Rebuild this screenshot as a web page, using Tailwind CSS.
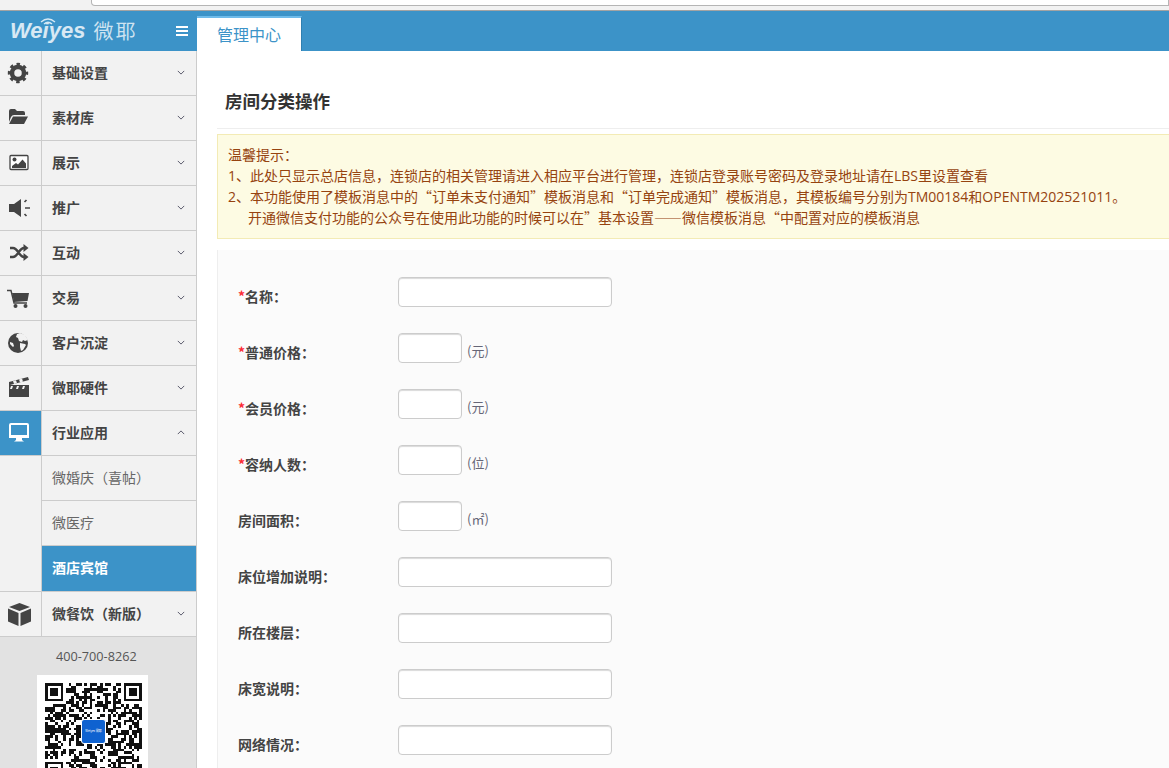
<!DOCTYPE html>
<html lang="zh-CN">
<head>
    <meta charset="utf-8">
    <title>房间分类操作</title>
    <script src="https://cdn.jsdelivr.net/npm/@tailwindcss/browser@4"></script>
</head>
<body class="h-screen overflow-hidden flex flex-col bg-white text-sm font-['Noto_Sans_CJK_SC','Liberation_Sans',sans-serif]">
    <!-- browser address bar leftover -->
    <div class="h-[11px] shrink-0 bg-[#f2f2f2] border-b border-[#a3a3a3] pl-[91px]">
        <div class="h-[6px] bg-white border border-t-0 border-[#b5b5b5] rounded-bl-sm"></div>
    </div>

    <div class="flex flex-1 min-h-0">
        <!-- sidebar -->
        <aside class="w-[197px] shrink-0 flex flex-col bg-[#e2e2e2] border-r border-[#ccc]">
            <div class="h-10 shrink-0 -mr-px bg-[#3c93c8] flex items-center pl-[10px] relative">
                <span class="relative text-white/80 italic font-bold text-[22px] leading-none font-['Liberation_Sans',sans-serif]">Weiyes
                    <svg class="absolute left-[29px] -top-[4px]" width="18" height="10" viewBox="0 0 18 10" fill="none" stroke="#d6e9f5" stroke-width="1.3"><path d="M2 6q7-6 14 0M5 8q4-3.500 8 0"/></svg>
                </span>
                <span class="ml-[8px] text-white/75 text-[20px] leading-none tracking-[2px]">微耶</span>
                <div class="absolute left-[176px] top-[15px] w-3 flex flex-col gap-[2px]">
                    <i class="block h-[2px] bg-white"></i>
                    <i class="block h-[2px] bg-white"></i>
                    <i class="block h-[2px] bg-white"></i>
                </div>
            </div>

            <nav class="bg-[#f2f2f2] shrink-0">
                <a class="flex h-[45px] border-b border-[#ccc]">
                    <svg class="w-[41px] h-[44px] shrink-0" viewBox="0 0 41 44" fill="#444"><circle cx="18" cy="22" r="6" fill="none" stroke="#444" stroke-width="4.500"/><circle cx="18" cy="22" r="8.700" fill="none" stroke="#444" stroke-width="3" stroke-dasharray="3.400 3.430" stroke-dashoffset="1.700"/></svg>
                    <div class="flex-1 flex items-center justify-between border-l border-[#ccc] pl-[10px] pr-[11px] pb-[2px] font-semibold text-[#444]"><span>基础设置</span><svg width="8" height="5" viewBox="0 0 10 6" fill="none" stroke="#556" stroke-width="1.200"><path d="M1 1l4 4 4-4"/></svg></div>
                </a>
                <a class="flex h-[45px] border-b border-[#ccc]">
                    <svg class="w-[41px] h-[44px] shrink-0" viewBox="0 0 41 44" fill="#444"><path d="M9 26V15q0-2 2-2h4l2 2h6q2 0 2 2v2H14q-2 0-3 2z"/><path d="M13 20.500h15l-4 7.500H9z"/></svg>
                    <div class="flex-1 flex items-center justify-between border-l border-[#ccc] pl-[10px] pr-[11px] pb-[2px] font-semibold text-[#444]"><span>素材库</span><svg width="8" height="5" viewBox="0 0 10 6" fill="none" stroke="#556" stroke-width="1.200"><path d="M1 1l4 4 4-4"/></svg></div>
                </a>
                <a class="flex h-[45px] border-b border-[#ccc]">
                    <svg class="w-[41px] h-[44px] shrink-0" viewBox="0 0 41 44" fill="#444"><rect x="10" y="14.500" width="18" height="14" rx="1" fill="#fff" stroke="#444" stroke-width="1.300"/><circle cx="14.500" cy="18.500" r="2"/><path d="M12 27v-2l4-3 2 1.500 4.500-5 3.500 4v4.500z"/></svg>
                    <div class="flex-1 flex items-center justify-between border-l border-[#ccc] pl-[10px] pr-[11px] pb-[2px] font-semibold text-[#444]"><span>展示</span><svg width="8" height="5" viewBox="0 0 10 6" fill="none" stroke="#556" stroke-width="1.200"><path d="M1 1l4 4 4-4"/></svg></div>
                </a>
                <a class="flex h-[45px] border-b border-[#ccc]">
                    <svg class="w-[41px] h-[44px] shrink-0" viewBox="0 0 41 44" fill="#444"><path d="M9 18h5l7-5v18l-7-5H9z"/><path d="M24.500 16l2-2M25 22h5M24.500 28l2 2" stroke="#444" stroke-width="1.700" fill="none"/></svg>
                    <div class="flex-1 flex items-center justify-between border-l border-[#ccc] pl-[10px] pr-[11px] pb-[2px] font-semibold text-[#444]"><span>推广</span><svg width="8" height="5" viewBox="0 0 10 6" fill="none" stroke="#556" stroke-width="1.200"><path d="M1 1l4 4 4-4"/></svg></div>
                </a>
                <a class="flex h-[45px] border-b border-[#ccc]">
                    <svg class="w-[41px] h-[44px] shrink-0" viewBox="0 0 41 44" fill="#444"><path d="M10 17h3c5 0 6 9 11 9M10 26h3c5 0 6-9 11-9" fill="none" stroke="#444" stroke-width="2.400"/><path d="M23.500 13l5 4-5 4zM23.500 22l5 4-5 4z"/></svg>
                    <div class="flex-1 flex items-center justify-between border-l border-[#ccc] pl-[10px] pr-[11px] pb-[2px] font-semibold text-[#444]"><span>互动</span><svg width="8" height="5" viewBox="0 0 10 6" fill="none" stroke="#556" stroke-width="1.200"><path d="M1 1l4 4 4-4"/></svg></div>
                </a>
                <a class="flex h-[45px] border-b border-[#ccc]">
                    <svg class="w-[41px] h-[44px] shrink-0" viewBox="0 0 41 44" fill="#444"><path d="M7 14.500h4l3 12.500h13" fill="none" stroke="#444" stroke-width="1.400"/><path d="M12 17h17l-1.500 8L14 26z"/><circle cx="15.500" cy="30" r="2"/><circle cx="25.500" cy="30" r="2"/></svg>
                    <div class="flex-1 flex items-center justify-between border-l border-[#ccc] pl-[10px] pr-[11px] pb-[2px] font-semibold text-[#444]"><span>交易</span><svg width="8" height="5" viewBox="0 0 10 6" fill="none" stroke="#556" stroke-width="1.200"><path d="M1 1l4 4 4-4"/></svg></div>
                </a>
                <a class="flex h-[45px] border-b border-[#ccc]">
                    <svg class="w-[41px] h-[44px] shrink-0" viewBox="0 0 41 44" fill="#444"><circle cx="18" cy="22" r="10"/><path d="M17 13l3-1 5 2 3 5-3 1-2-1-1 2-3-1-1-3-2-1zM20 22l5 1 1 1-3 5-2 1-1-4zM10 21l3 1 1 3-1 1-3-3z" fill="#f2f2f2"/></svg>
                    <div class="flex-1 flex items-center justify-between border-l border-[#ccc] pl-[10px] pr-[11px] pb-[2px] font-semibold text-[#444]"><span>客户沉淀</span><svg width="8" height="5" viewBox="0 0 10 6" fill="none" stroke="#556" stroke-width="1.200"><path d="M1 1l4 4 4-4"/></svg></div>
                </a>
                <a class="flex h-[45px] border-b border-[#ccc]">
                    <svg class="w-[41px] h-[44px] shrink-0" viewBox="0 0 41 44" fill="#444"><rect x="9" y="19" width="20" height="12"/><path d="M9 16l19-5 1 3-20 5.300z"/><path d="M13 15l3-.800 1 3-3 .800zM19 13.400l3-.800 1 3-3 .800zM11 20h2l-1 3h-2zM17 20h2l-1 3h-2zM23 20h2l-1 3h-2z" fill="#f2f2f2"/></svg>
                    <div class="flex-1 flex items-center justify-between border-l border-[#ccc] pl-[10px] pr-[11px] pb-[2px] font-semibold text-[#444]"><span>微耶硬件</span><svg width="8" height="5" viewBox="0 0 10 6" fill="none" stroke="#556" stroke-width="1.200"><path d="M1 1l4 4 4-4"/></svg></div>
                </a>
                <a class="flex h-[45px] border-b border-[#ccc]">
                    <div class="w-[41px] shrink-0 h-[44px] bg-[#3c93c8]">
                        <svg class="w-[41px] h-[44px]" viewBox="0 0 41 44" fill="#fff"><rect x="10" y="13" width="18" height="13" rx="1" fill="#3c93c8" stroke="#fff" stroke-width="2"/><path d="M9 24h20v3H9zM16 27h6v2l2 1.500H14l2-1.500z"/></svg>
                    </div>
                    <div class="flex-1 flex items-center justify-between border-l border-[#ccc] pl-[10px] pr-[11px] pb-[2px] font-semibold text-[#444]"><span>行业应用</span><svg width="8" height="5" viewBox="0 0 10 6" fill="none" stroke="#556" stroke-width="1.200"><path d="M1 5l4-4 4 4"/></svg></div>
                </a>
                <div class="ml-[41px] border-l border-[#ccc]">
                    <a class="flex items-center h-[45px] pl-[10px] pb-[2px] border-b border-[#ccc] text-[#666]">微婚庆<span class="font-['Noto_Sans_CJK_TC',sans-serif]">（</span>喜帖<span class="font-['Noto_Sans_CJK_TC',sans-serif]">）</span></a>
                    <a class="flex items-center h-[45px] pl-[10px] pb-[2px] border-b border-[#ccc] text-[#666]">微医疗</a>
                    <a class="flex items-center h-[45px] pl-[10px] pb-[3px] bg-[#3c93c8] text-white font-semibold">酒店宾馆</a>
                </div>
                <a class="flex h-[46px] border-y border-[#ccc]">
                    <svg class="w-[41px] h-[44px] shrink-0" viewBox="0 0 41 44" fill="#444"><path d="M19.500 11l10.500 4-10.500 4L9 15z"/><path d="M8 16.500l10.500 4.500v13L8 29.500zM20.500 21L31 16.500v13L20.500 34z"/></svg>
                    <div class="flex-1 flex items-center justify-between border-l border-[#ccc] pl-[10px] pr-[11px] pb-[2px] font-semibold text-[#444]"><span>微餐饮<span class="font-['Noto_Sans_CJK_TC',sans-serif]">（</span>新版<span class="font-['Noto_Sans_CJK_TC',sans-serif]">）</span></span><svg width="8" height="5" viewBox="0 0 10 6" fill="none" stroke="#556" stroke-width="1.200"><path d="M1 1l4 4 4-4"/></svg></div>
                </a>
            </nav>

            <div class="flex flex-col items-start pt-[10px]">
                <p class="ml-[56px] text-[12.700px] leading-[18px] text-[#555] font-['Open_Sans',sans-serif]">400-700-8262</p>
                <div class="ml-[37px] mt-[10px] w-[111px] h-[111px] shrink-0 bg-white relative">
                    <svg id="qr" class="absolute left-[8px] top-[8px]" width="97" height="97" viewBox="0 0 37 37" shape-rendering="crispEdges"></svg>
                    <div class="absolute left-[44px] top-[44px] w-[25px] h-[25px] rounded-[3px] bg-[#0f62d0] border border-white flex items-center justify-center text-[3px] text-white">Weiyes 微耶</div>
                </div>
            </div>
        </aside>

        <!-- main -->
        <main class="flex-1 min-w-0 flex flex-col">
            <div class="h-10 shrink-0 bg-[#3c93c8] pt-[5px]">
                <div class="w-[105px] h-[35px] bg-white border-t-2 border-[#6fbbea] border-r border-r-[#2f7fb0] text-[#3c93c8] text-base pb-[2px] flex items-center justify-center">管理中心</div>
            </div>

            <div class="pl-5 flex-1 min-h-0 overflow-hidden">
                <div class="h-[78px] border-b border-[#eee] pl-2 flex items-center pt-[22px]">
                    <h2 class="text-[17.500px] font-bold text-[#333]">房间分类操作</h2>
                </div>

                <div class="mt-[5px] h-[105px] bg-[#fdfbe3] border-y border-l border-[#f3ebb5] pl-[10px] pt-[9px] text-sm leading-[21px] text-[#96430f] whitespace-nowrap overflow-hidden">
                    <p>温馨提示<span class="font-['Noto_Sans_CJK_TC',sans-serif]">：</span></p>
                    <p><span class="font-['Open_Sans',sans-serif]">1</span>、此处只显示总店信息<span class="font-['Noto_Sans_CJK_TC',sans-serif]">，</span>连锁店的相关管理请进入相应平台进行管理<span class="font-['Noto_Sans_CJK_TC',sans-serif]">，</span>连锁店登录账号密码及登录地址请在<span class="font-['Open_Sans',sans-serif]">LBS</span>里设置查看</p>
                    <p><span class="font-['Open_Sans',sans-serif]">2</span>、本功能使用了模板消息中的“订单未支付通知”模板消息和“订单完成通知”模板消息<span class="font-['Noto_Sans_CJK_TC',sans-serif]">，</span>其模板编号分别为<span class="font-['Open_Sans',sans-serif]">TM00184</span>和<span class="font-['Open_Sans',sans-serif]">OPENTM202521011</span>。</p>
                    <p class="pl-[20px]">开通微信支付功能的公众号在使用此功能的时候可以在”基本设置——微信模板消息“中配置对应的模板消息</p>
                </div>

                <form class="mt-[11px] h-full bg-[#fbfbfb] border-l border-[#eee] pl-5 pt-[27px]">
                    <div class="flex h-[56px]">
                        <label class="w-40 pt-[9px] font-semibold text-[#444] leading-5"><span class="text-red-500">*</span>名称<span class="font-['Noto_Sans_CJK_TC',sans-serif]">：</span></label>
                        <input class="w-[214px] h-[30px] bg-white border border-[#ccc] rounded shadow-[inset_0_1px_1px_rgba(0,0,0,0.15)]">
                    </div>
                    <div class="flex h-[56px]">
                        <label class="w-40 pt-[9px] font-semibold text-[#444] leading-5"><span class="text-red-500">*</span>普通价格<span class="font-['Noto_Sans_CJK_TC',sans-serif]">：</span></label>
                        <input class="w-16 h-[30px] bg-white border border-[#ccc] rounded shadow-[inset_0_1px_1px_rgba(0,0,0,0.15)]">
                        <span class="ml-[5px] pt-[8px] text-[13px] leading-5 text-[#667]">(元)</span>
                    </div>
                    <div class="flex h-[56px]">
                        <label class="w-40 pt-[9px] font-semibold text-[#444] leading-5"><span class="text-red-500">*</span>会员价格<span class="font-['Noto_Sans_CJK_TC',sans-serif]">：</span></label>
                        <input class="w-16 h-[30px] bg-white border border-[#ccc] rounded shadow-[inset_0_1px_1px_rgba(0,0,0,0.15)]">
                        <span class="ml-[5px] pt-[8px] text-[13px] leading-5 text-[#667]">(元)</span>
                    </div>
                    <div class="flex h-[56px]">
                        <label class="w-40 pt-[9px] font-semibold text-[#444] leading-5"><span class="text-red-500">*</span>容纳人数<span class="font-['Noto_Sans_CJK_TC',sans-serif]">：</span></label>
                        <input class="w-16 h-[30px] bg-white border border-[#ccc] rounded shadow-[inset_0_1px_1px_rgba(0,0,0,0.15)]">
                        <span class="ml-[5px] pt-[8px] text-[13px] leading-5 text-[#667]">(位)</span>
                    </div>
                    <div class="flex h-[56px]">
                        <label class="w-40 pt-[9px] font-semibold text-[#444] leading-5">房间面积<span class="font-['Noto_Sans_CJK_TC',sans-serif]">：</span></label>
                        <input class="w-16 h-[30px] bg-white border border-[#ccc] rounded shadow-[inset_0_1px_1px_rgba(0,0,0,0.15)]">
                        <span class="ml-[5px] pt-[8px] text-[13px] leading-5 text-[#667]">(㎡)</span>
                    </div>
                    <div class="flex h-[56px]">
                        <label class="w-40 pt-[9px] font-semibold text-[#444] leading-5">床位增加说明<span class="font-['Noto_Sans_CJK_TC',sans-serif]">：</span></label>
                        <input class="w-[214px] h-[30px] bg-white border border-[#ccc] rounded shadow-[inset_0_1px_1px_rgba(0,0,0,0.15)]">
                    </div>
                    <div class="flex h-[56px]">
                        <label class="w-40 pt-[9px] font-semibold text-[#444] leading-5">所在楼层<span class="font-['Noto_Sans_CJK_TC',sans-serif]">：</span></label>
                        <input class="w-[214px] h-[30px] bg-white border border-[#ccc] rounded shadow-[inset_0_1px_1px_rgba(0,0,0,0.15)]">
                    </div>
                    <div class="flex h-[56px]">
                        <label class="w-40 pt-[9px] font-semibold text-[#444] leading-5">床宽说明<span class="font-['Noto_Sans_CJK_TC',sans-serif]">：</span></label>
                        <input class="w-[214px] h-[30px] bg-white border border-[#ccc] rounded shadow-[inset_0_1px_1px_rgba(0,0,0,0.15)]">
                    </div>
                    <div class="flex h-[56px]">
                        <label class="w-40 pt-[9px] font-semibold text-[#444] leading-5">网络情况<span class="font-['Noto_Sans_CJK_TC',sans-serif]">：</span></label>
                        <input class="w-[214px] h-[30px] bg-white border border-[#ccc] rounded shadow-[inset_0_1px_1px_rgba(0,0,0,0.15)]">
                    </div>
                </form>
            </div>
        </main>
    </div>

    <script>
        // qr code: finder squares plus a fixed pseudo random fill
        const size = 37;
        let seed = 8262;
        let d = '';
        const inFinder = (x, y) => (x < 8 && y < 8) || (x > 28 && y < 8) || (x < 8 && y > 28);
        for (let y = 0; y < size; y++) {
            for (let x = 0; x < size; x++) {
                seed = (seed * 16807) % 2147483647;
                if (!inFinder(x, y) && seed % 100 < 52) d += `M${x} ${y}h1v1h-1z`;
            }
        }
        [[0, 0], [30, 0], [0, 30]].forEach(([x, y]) => {
            d += `M${x} ${y}h7v7h-7zM${x + 1} ${y + 1}v5h5v-5zM${x + 2} ${y + 2}h3v3h-3z`;
        });
        document.getElementById('qr').innerHTML = `<path fill="#111" fill-rule="evenodd" d="${d}"/>`;
    </script>
</body>
</html>
